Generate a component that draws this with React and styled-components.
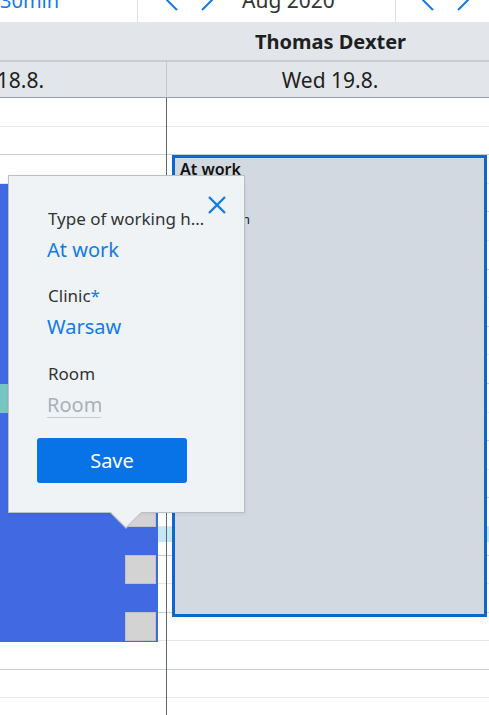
import React from "react";
import styled, { createGlobalStyle } from "styled-components";

const GlobalStyle = createGlobalStyle`
  html, body { margin: 0; padding: 0; background: #fff; overflow: hidden; }
  body { font-family: "Noto Sans", "Open Sans", sans-serif; color: #222; }
`;

const ROW_H = 28.6;

const Screen = styled.div`
  position: relative;
  width: 489px;
  height: 715px;
  overflow: hidden;
`;

const Scrolled = styled.div`
  margin-top: -22px;
`;

const Toolbar = styled.div`
  display: flex;
  height: 44px;
  background: #fff;
`;

const ToolSection = styled.div`
  display: flex;
  align-items: center;
  flex: none;
  box-sizing: border-box;
  width: ${(p) => p.$w}px;
  padding-left: ${(p) => p.$pad || 0}px;
  gap: ${(p) => p.$gap || 0}px;
  border-left: ${(p) => (p.$first ? "none" : "1px solid #dde1e5")};
`;

const ToolLink = styled.span`
  font-size: 20px;
  color: #127be6;
`;

const ToolTitle = styled.span`
  font-size: 21px;
  color: #333;
  margin-left: ${(p) => p.$ml || 0}px;
`;

const Calendar = styled.div`
  width: 665px;
  margin-left: -166px;
`;

const ResourceRow = styled.div`
  display: grid;
  grid-template-columns: 332px 333px;
  height: 38px;
  background: #e2e6ea;
  border-bottom: 2px solid #c8cdd3;
`;

const ResourceName = styled.div`
  grid-column: 2;
  display: flex;
  align-items: center;
  justify-content: center;
  padding-right: 4px;
  font-size: 20px;
  font-weight: 700;
  color: #1d1f22;
`;

const DayRow = styled.div`
  display: grid;
  grid-template-columns: 332px 333px;
  height: 35px;
  background: #e2e6ea;
  border-bottom: 1px solid #9aa1a8;
`;

const DayCell = styled.div`
  display: flex;
  align-items: center;
  justify-content: center;
  font-size: 21px;
  color: #1d1f22;
  padding-right: ${(p) => (p.$divider ? 6 : 0)}px;
  border-left: ${(p) => (p.$divider ? "1px solid #c4cad0" : "none")};
`;

const Body = styled.div`
  display: grid;
  grid-template-columns: 332px 333px;
`;

const DayColumn = styled.div`
  position: relative;
  border-left: ${(p) => (p.$divider ? "1px solid #5f666e" : "none")};
`;

const Slot = styled.div`
  box-sizing: border-box;
  height: ${ROW_H}px;
  border-bottom: 1px solid ${(p) => (p.$hour ? "#c9ced4" : "#e4e7eb")};
  background: ${(p) =>
    p.$now ? "linear-gradient(#c6e7f6 0 15px, transparent 15px)" : "transparent"};
`;

const Event = styled.div`
  position: absolute;
  box-sizing: border-box;
  background: ${(p) => p.$bg};
  border: ${(p) => p.$border || "none"};
`;

const EventTitle = styled.div`
  font-size: 16px;
  font-weight: 600;
  color: #111;
  line-height: 18px;
  padding: 2px 5px;
`;

const EventText = styled.div`
  font-size: 13px;
  color: #222;
  line-height: 18px;
  padding: 30px 5px 0;
`;

const Handle = styled.div`
  position: absolute;
  right: 10px;
  width: 31px;
  height: 29px;
  box-sizing: border-box;
  background: #d3d3d3;
  border: 1px solid #c2c2c2;
`;

const Popup = styled.div`
  position: absolute;
  left: 8px;
  top: 175px;
  width: 237px;
  height: 338px;
  box-sizing: border-box;
  background: #eff3f6;
  border: 1px solid #b9c0c7;
  box-shadow: 0 1px 3px rgba(0, 0, 0, 0.08);
`;

const Arrow = styled.div`
  position: absolute;
  left: 106px;
  bottom: -11.5px;
  width: 21px;
  height: 21px;
  background: #eff3f6;
  border-right: 1px solid #b9c0c7;
  border-bottom: 1px solid #b9c0c7;
  transform: rotate(45deg);
`;

const CloseButton = styled.button`
  position: absolute;
  top: 18px;
  right: 16px;
  width: 22px;
  height: 22px;
  padding: 0;
  border: none;
  background: transparent;
  display: flex;
  align-items: center;
  justify-content: center;
`;

const Form = styled.div`
  display: flex;
  flex-direction: column;
  padding: 31px 0 0 28px;
`;

const Field = styled.div`
  display: flex;
  flex-direction: column;
  gap: 5px;
  padding-left: 11px;
  margin-bottom: ${(p) => p.$mb || 0}px;
`;

const Label = styled.div`
  font-size: 17px;
  line-height: 24px;
  color: #333;
  white-space: nowrap;
  overflow: hidden;
  text-overflow: ellipsis;
  max-width: 160px;
`;

const Required = styled.span`
  color: #127be6;
`;

const Value = styled.div`
  font-size: 20px;
  line-height: 28px;
  color: #127be6;
  margin-left: -1px;
`;

const Input = styled.input`
  width: 54px;
  height: 27px;
  box-sizing: border-box;
  margin: 0 0 0 -1px;
  padding: 0;
  border: none;
  border-bottom: 1px solid #c6ccd2;
  background: transparent;
  font-family: inherit;
  font-size: 20px;
  color: #333;
  outline: none;
  &::placeholder {
    color: #a9b0b8;
  }
`;

const SaveButton = styled.button`
  width: 150px;
  height: 45px;
  margin-top: 20px;
  border: none;
  border-radius: 3px;
  background: #0873e6;
  color: #fff;
  font-family: inherit;
  font-size: 20px;
`;

const Chevron = ({ dir }) => (
  <svg width="12" height="22" viewBox="0 0 12 22">
    <path
      d={dir === "left" ? "M11 1 L1 11 L11 21" : "M1 1 L11 11 L1 21"}
      fill="none"
      stroke="#127be6"
      strokeWidth="2"
    />
  </svg>
);

const slots = Array.from({ length: 22 }, (_, i) => i);

const Slots = () =>
  slots.map((i) => <Slot key={i} $hour={i % 2 === 1} $now={i === 15} />);

export default function App() {
  return (
    <>
      <GlobalStyle />
      <Screen>
        <Scrolled>
          <Toolbar>
            <ToolSection $w={137} $first>
              <ToolLink>30min</ToolLink>
            </ToolSection>
            <ToolSection $w={258} $pad={28} $gap={23}>
              <Chevron dir="left" />
              <Chevron dir="right" />
              <ToolTitle $ml={6}>Aug 2020</ToolTitle>
            </ToolSection>
            <ToolSection $w={100} $pad={26} $gap={23}>
              <Chevron dir="left" />
              <Chevron dir="right" />
            </ToolSection>
          </Toolbar>
          <Calendar>
            <ResourceRow>
              <ResourceName>Thomas Dexter</ResourceName>
            </ResourceRow>
            <DayRow>
              <DayCell>Tue 18.8.</DayCell>
              <DayCell $divider>Wed 19.8.</DayCell>
            </DayRow>
            <Body>
              <DayColumn>
                <Slots />
                <Event $bg="#4169e1" style={{ left: 150, right: 8, top: 86, height: 458 }} />
                <Event $bg="#78c6c1" style={{ left: 150, right: 8, top: 286, height: 29 }} />
                {[400, 457, 514].map((t) => (
                  <Handle key={t} style={{ top: t }} />
                ))}
              </DayColumn>
              <DayColumn $divider>
                <Slots />
                <Event
                  $bg="#d2d9e1"
                  $border="3px solid #0b68cf"
                  style={{ left: 5, width: 315, top: 57, height: 462 }}
                >
                  <EventTitle>At work</EventTitle>
                  <EventText>Description</EventText>
                </Event>
              </DayColumn>
            </Body>
          </Calendar>
        </Scrolled>
        <Popup>
          <Arrow />
          <CloseButton>
            <svg width="20" height="20" viewBox="0 0 20 20">
              <path d="M2 2 L18 18 M18 2 L2 18" stroke="#127be6" strokeWidth="2.4" />
            </svg>
          </CloseButton>
          <Form>
            <Field $mb={20}>
              <Label>Type of working hours</Label>
              <Value>At work</Value>
            </Field>
            <Field $mb={21}>
              <Label>
                Clinic<Required>*</Required>
              </Label>
              <Value>Warsaw</Value>
            </Field>
            <Field>
              <Label>Room</Label>
              <Input placeholder="Room" readOnly />
            </Field>
            <SaveButton>Save</SaveButton>
          </Form>
        </Popup>
      </Screen>
    </>
  );
}
